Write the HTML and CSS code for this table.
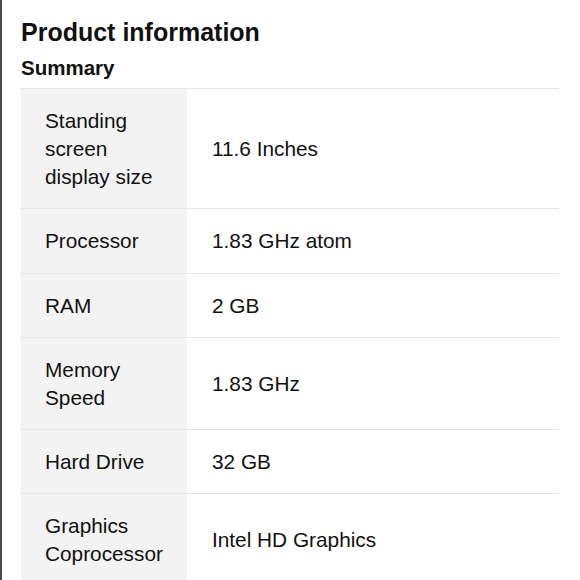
FILE: index.html
```html
<!DOCTYPE html>
<html>
<head>
<meta charset="utf-8">
<link rel="stylesheet" href="styles.css">
</head>
<body>
<div class="page">
  <h1 class="title">Product information</h1>
  <h2 class="subtitle">Summary</h2>
  <table class="spec">
    <tr><th>Standing screen display size</th><td>11.6 Inches</td></tr>
    <tr><th>Processor</th><td>1.83 GHz atom</td></tr>
    <tr><th>RAM</th><td>2 GB</td></tr>
    <tr><th>Memory Speed</th><td>1.83 GHz</td></tr>
    <tr><th>Hard Drive</th><td>32 GB</td></tr>
    <tr><th>Graphics Coprocessor</th><td>Intel HD Graphics</td></tr>
  </table>
</div>
</body>
</html>
```
FILE: styles.css
```css
html, body {
  margin: 0;
  padding: 0;
  background: #fff;
}
body {
  font-family: "Liberation Sans", Arial, sans-serif;
  color: #111;
  overflow: hidden;
}
.page {
  border-left: 2px solid #4a4a4a;
  padding: 0 21px 0 19px;
  min-height: 580px;
  box-sizing: border-box;
}
.title {
  margin: 0;
  padding-top: 17px;
  font-size: 25px;
  line-height: 30px;
  font-weight: bold;
}
.subtitle {
  margin: 0;
  padding-top: 9px;
  font-size: 20.5px;
  line-height: 24px;
  font-weight: bold;
  padding-bottom: 8px;
}
.spec {
  width: 100%;
  border-collapse: collapse;
  border-top: 1px solid #e6e6e6;
}
.spec th, .spec td {
  font-size: 20.8px;
  line-height: 28px;
  font-weight: normal;
  text-align: left;
  border-bottom: 1px solid #e6e6e6;
  padding: 18px 16px 17.3px 24px;
  vertical-align: middle;
}
.spec th {
  background: #f3f3f3;
  width: 126px;
}
.spec td {
  padding-left: 25px;
}
```
